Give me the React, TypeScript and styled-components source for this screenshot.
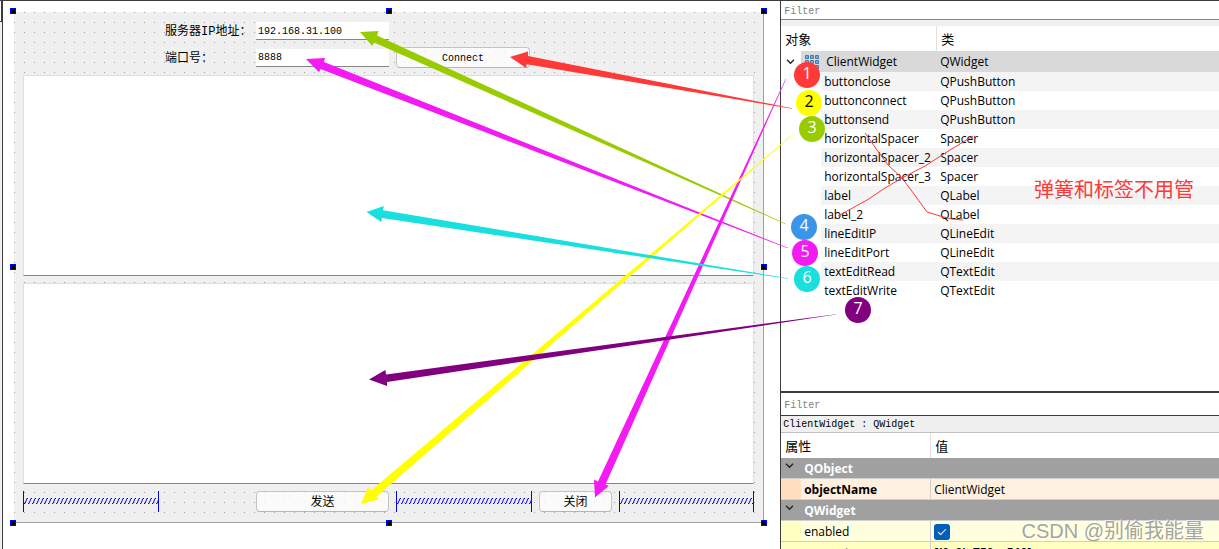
import React from "react";
import styled, { createGlobalStyle } from "styled-components";

const uiFont = `"Open Sans", "Noto Sans CJK SC", sans-serif`;
const monoFont = `"Liberation Mono", "Noto Sans CJK SC", monospace`;

const GlobalStyle = createGlobalStyle`
  *, *::before, *::after { box-sizing: border-box; }
  body { margin: 0; background: #fff; color: #000; font: 12px/18px ${uiFont}; }
  table { border-collapse: separate; border-spacing: 0; table-layout: fixed; width: 100%; }
  th, td { padding: 0; text-align: left; font-weight: 400; white-space: nowrap; }
  button, input, textarea { font: inherit; color: inherit; border-radius: 0; margin: 0; }
`;

const Page = styled.main`
  position: relative;
  display: grid;
  grid-template-columns: minmax(0, 16fr) minmax(0, 9fr);
  grid-template-rows: minmax(0, 1fr);
  height: 100vh;
  min-height: 400px;
  overflow: hidden;
  border-top: 1px solid #3c3c3c;
`;

const Workspace = styled.section`
  display: flex;
  min-width: 0;
`;

const DockEdge = styled.div`
  width: 3px;
  background: #f0f0f0;
  border-right: 1px solid #3c3c3c;
  &::before {
    content: "";
    display: block;
    height: 21px;
    background: #fff;
    border: solid #3c3c3c;
    border-width: 0 1px 1px 0;
  }
`;

const Canvas = styled.div`
  flex: 1;
  display: flex;
  padding: 11px 16px 26px 11px;
`;

const Form = styled.form`
  position: relative;
  flex: 1;
  display: flex;
  flex-direction: column;
  gap: 7px;
  padding: 10px 9px;
  border: solid #a0a0a0;
  border-width: 0 1px 1px 0;
  background: conic-gradient(from 270deg at 1px 1px, #a0a0a0 90deg, #f0f0f0 0) 0 0 / 10px 10px;
  font: 10px/18px ${monoFont};
`;

const Handles = styled.div`
  position: absolute;
  inset: -4px;
  display: grid;
  grid-template-columns: repeat(3, 6px);
  grid-template-rows: repeat(3, 6px);
  justify-content: space-between;
  align-content: space-between;
  pointer-events: none;
`;

const Handle = styled.i<{ $hidden: boolean }>`
  background: #000;
  border: 1px solid #00f;
  visibility: ${(p) => (p.$hidden ? "hidden" : "visible")};
`;

const Fields = styled.div`
  display: grid;
  grid-template-columns: 135fr 84px 133fr 134fr 217fr;
  grid-template-rows: 18px 21px;
  gap: 7px;
  align-items: center;
`;

const FieldLabel = styled.label`
  grid-column: 2;
  padding-top: 2px;
  font-size: 12px;
  white-space: nowrap;
`;

const LineEdit = styled.input`
  width: 100%;
  height: 18px;
  padding: 2px 2px 0;
  border: 0;
  border-bottom: 1px solid #868686;
  background: #fff;
  outline: 0;
`;

const PushButton = styled.button<{ $cjk?: boolean }>`
  width: 100%;
  height: 21px;
  padding: 2px 0 0;
  border: 1px solid #c4c4c4;
  border-bottom-color: #b4b4b4;
  border-radius: 4px;
  background: rgba(255, 255, 255, 0.7);
  font-size: ${(p) => (p.$cjk ? "12px" : "10px")};
`;

const TextEdit = styled.textarea`
  flex: 1;
  min-height: 0;
  width: 100%;
  padding: 4px;
  border: 1px solid #e0e0e0;
  border-bottom-color: #868686;
  background: #fff;
  resize: none;
  outline: 0;
`;

const Actions = styled.div`
  display: grid;
  grid-template-columns: 136fr 83fr 133fr 136fr 73fr 135fr;
  column-gap: 7px;
`;

const SpringBox = styled.svg`
  display: block;
  width: 100%;
  height: 21px;
  border: solid #00f;
  border-width: 0 1px;
`;

const Docks = styled.aside`
  display: grid;
  grid-template-rows: minmax(0, 390fr) minmax(0, 158fr);
  border-left: 1px solid #3c3c3c;
  min-width: 0;
`;

const Panel = styled.section<{ $framed?: boolean }>`
  overflow: hidden;
  border-top: ${(p) => (p.$framed ? "2px solid #3c3c3c" : "0")};
`;

const FilterBox = styled.input<{ $framed?: boolean }>`
  display: block;
  width: 100%;
  height: ${(p) => (p.$framed ? "23px" : "19px")};
  padding: 3px 3px 0;
  border: 0;
  border-bottom: 1px solid ${(p) => (p.$framed ? "#3c3c3c" : "#868686")};
  background: #fff;
  outline: 0;
  font: 10px/14px ${monoFont};
  &::placeholder { color: #808080; opacity: 1; }
`;

const Gap = styled.div`
  height: 6px;
  background: #f0f0f0;
`;

const HeadRow = styled.tr`
  height: 25px;
  font-size: 13px;
  th { padding-left: 4px; }
  th + th { border-left: 1px solid #e0e0e0; }
`;

const RootRow = styled.tr`
  height: 21px;
  td { background: linear-gradient(#d9d9d9, #d9d9d9) no-repeat; }
  td:first-child { background-position: 20px 0; }
  td + td { padding-left: 4px; }
`;

const RootCell = styled.div`
  display: flex;
  align-items: center;
  padding-left: 5px;
  svg { margin-right: 10px; }
  svg + svg { margin-right: 7px; }
`;

const ItemRow = styled.tr<{ $alt: boolean }>`
  height: 19px;
  td {
    background: ${(p) => (p.$alt ? "linear-gradient(#f4f4f4, #f4f4f4)" : "none")} no-repeat;
  }
  td:first-child { padding-left: 43px; background-position: 40px 0; }
  td + td { padding-left: 4px; }
`;

const ObjectPath = styled.div`
  height: 17px;
  padding: 0 2px;
  border-bottom: 1px solid #c0c0c0;
  background: #f0f0f0;
  font: 10px/18px ${monoFont};
`;

const GroupRow = styled.tr`
  height: 21px;
  background: #a0a0a0;
  color: #fff;
  th {
    border-bottom: 1px solid #d0d0d0;
    font-weight: 700;
    padding: 2px 0 0 4px;
  }
  svg { margin: 0 10px 4px 0; }
`;

const PropRow = styled.tr<{ $indent: string; $fill: string; $strong?: boolean }>`
  height: 21px;
  background: ${(p) => p.$fill};
  th, td { border-bottom: 1px solid #d0d0d0; }
  th {
    padding: 2px 0 0 23px;
    background: linear-gradient(${(p) => `${p.$indent}, ${p.$indent}`}) 0 0 / 20px 100% no-repeat;
    font-weight: ${(p) => (p.$strong ? 700 : 400)};
  }
  td { border-left: 1px solid #d0d0d0; padding: 2px 0 0 3px; }
`;

const Check = styled.input`
  appearance: none;
  display: block;
  width: 16px;
  height: 16px;
  border-radius: 3px;
  background: #005fb8;
  &::before {
    content: "";
    display: block;
    width: 8px;
    height: 4px;
    margin: 5px 4px;
    border: solid #fff;
    border-width: 0 0 1px 1px;
    transform: rotate(-45deg);
  }
`;

const Overlay = styled.svg`
  position: absolute;
  left: 0;
  top: -1px;
  width: 100%;
  pointer-events: none;
`;

const Badge = styled.span<{ $x: number; $y: number; $bg: string; $dark?: boolean }>`
  position: absolute;
  left: ${(p) => (p.$x / 1219) * 100}%;
  top: ${(p) => p.$y}px;
  width: 26px;
  height: 26px;
  margin: -14px 0 0 -13px;
  border-radius: 50%;
  background: ${(p) => p.$bg};
  color: ${(p) => (p.$dark ? "#000" : "#fff")};
  font-size: 16px;
  line-height: 23px;
  text-align: center;
`;

const Note = styled.p`
  position: absolute;
  right: 25px;
  top: 174px;
  margin: 0;
  color: #ff3838;
  font: 400 20px/28px "Noto Sans CJK SC", sans-serif;
`;

const Watermark = styled.p`
  position: absolute;
  right: 15px;
  bottom: 4px;
  margin: 0;
  color: rgba(140, 140, 140, 0.8);
  font: 20px/28px "Liberation Sans", "Noto Sans CJK SC", sans-serif;
  text-shadow: -1px -1px 0 rgba(255, 255, 255, 0.6);
`;

const Chevron = ({ color = "#222" }: { color?: string }) => (
  <svg width="9" height="6" viewBox="0 0 9 6" fill="none" stroke={color} strokeWidth="1.3">
    <path d="M1 .8 4.5 4.3 8 .8" />
  </svg>
);

const WidgetIcon = () => (
  <svg width="14" height="14" viewBox="0 0 14 14">
    {[0, 5, 10].flatMap((y) =>
      [0, 5, 10].map((x) => (
        <g key={`${x}-${y}`}>
          <rect x={x} y={y} width="4" height="4" rx="1" fill="#4478a8" />
          <rect x={x + 1} y={y + 1} width="2" height="2" fill="#74aedd" />
        </g>
      )),
    )}
  </svg>
);

const Spring = ({ id }: { id: string }) => (
  <SpringBox aria-hidden="true">
    <defs>
      <pattern id={id} width="4" height="21" patternUnits="userSpaceOnUse">
        <path d="M0 12.5 1 12.5 3 7.5 4 7.5" fill="none" stroke="#00f" />
      </pattern>
    </defs>
    <rect width="100%" height="21" fill={`url(#${id})`} />
  </SpringBox>
);

const items: [string, string][] = [
  ["buttonclose", "QPushButton"],
  ["buttonconnect", "QPushButton"],
  ["buttonsend", "QPushButton"],
  ["horizontalSpacer", "Spacer"],
  ["horizontalSpacer_2", "Spacer"],
  ["horizontalSpacer_3", "Spacer"],
  ["label", "QLabel"],
  ["label_2", "QLabel"],
  ["lineEditIP", "QLineEdit"],
  ["lineEditPort", "QLineEdit"],
  ["textEditRead", "QTextEdit"],
  ["textEditWrite", "QTextEdit"],
];

const arrows = [
  { fill: "#ff3838", points: "510,57 528,51.5 528,56 792,108.2 792,108.8 526.7,64.3 526,68" },
  { fill: "#99cc00", points: "360,32 378.5,31 377,35.5 786,223.8 785.7,224.3 374,42.5 372.3,46" },
  { fill: "#f31bf3", points: "306,59 325,58 324,62 788,247.8 787.7,248.3 320.5,69 319,72.3" },
  { fill: "#f31bf3", points: "595,497.5 594,479.5 598,481.5 785.5,79 786,79.2 605.5,484.5 608.8,486" },
  { fill: "#ffff00", points: "361,504 368,487 371,490.5 791,135.6 791.3,136 376.5,496.5 379,499.3" },
  { fill: "#19dfdf", points: "366.5,212 383.8,206 383,210.3 788,278.3 788,278.8 382,218 381.3,222" },
  { fill: "#800080", points: "369,379.5 385.3,370 386.2,374.4 836,314.2 836,314.6 387,382 387,386" },
];

const badges = [
  { n: 1, x: 807, y: 75, bg: "#ff3838" },
  { n: 2, x: 809, y: 103, bg: "#ffff00", dark: true },
  { n: 3, x: 812, y: 129, bg: "#99cc00" },
  { n: 4, x: 804, y: 227, bg: "#3895e7" },
  { n: 5, x: 805, y: 253, bg: "#f31bf3" },
  { n: 6, x: 807, y: 279, bg: "#19dfdf" },
  { n: 7, x: 858, y: 310, bg: "#800080" },
];

export default function App() {
  return (
    <>
      <GlobalStyle />
      <Page>
        <Workspace>
          <DockEdge />
          <Canvas>
            <Form onSubmit={(e) => e.preventDefault()}>
              <Fields>
                <FieldLabel htmlFor="ip">服务器IP地址：</FieldLabel>
                <LineEdit id="ip" defaultValue="192.168.31.100" />
                <FieldLabel htmlFor="port">端口号：</FieldLabel>
                <LineEdit id="port" defaultValue="8888" />
                <PushButton type="button">Connect</PushButton>
              </Fields>
              <TextEdit aria-label="textEditRead" />
              <TextEdit aria-label="textEditWrite" />
              <Actions>
                <Spring id="spring-left" />
                <span />
                <PushButton type="button" $cjk>发送</PushButton>
                <Spring id="spring-middle" />
                <PushButton type="button" $cjk>关闭</PushButton>
                <Spring id="spring-right" />
              </Actions>
              <Handles aria-hidden="true">
                {Array.from({ length: 9 }, (_, i) => (
                  <Handle key={i} $hidden={i === 4} />
                ))}
              </Handles>
            </Form>
          </Canvas>
        </Workspace>

        <Docks>
          <Panel>
            <FilterBox placeholder="Filter" aria-label="Filter objects" />
            <Gap />
            <table>
              <colgroup>
                <col style={{ width: "155px" }} />
                <col />
              </colgroup>
              <thead>
                <HeadRow>
                  <th>对象</th>
                  <th>类</th>
                </HeadRow>
              </thead>
              <tbody>
                <RootRow>
                  <td>
                    <RootCell>
                      <Chevron />
                      <WidgetIcon />
                      ClientWidget
                    </RootCell>
                  </td>
                  <td>QWidget</td>
                </RootRow>
                {items.map(([name, type], i) => (
                  <ItemRow key={name} $alt={i % 2 === 0}>
                    <td>{name}</td>
                    <td>{type}</td>
                  </ItemRow>
                ))}
              </tbody>
            </table>
          </Panel>

          <Panel $framed>
            <FilterBox $framed placeholder="Filter" aria-label="Filter properties" />
            <ObjectPath>ClientWidget : QWidget</ObjectPath>
            <table>
              <colgroup>
                <col style={{ width: "149px" }} />
                <col />
              </colgroup>
              <thead>
                <HeadRow>
                  <th>属性</th>
                  <th>值</th>
                </HeadRow>
              </thead>
              <tbody>
                <GroupRow>
                  <th colSpan={2}><Chevron />QObject</th>
                </GroupRow>
                <PropRow $indent="#ffdfbf" $fill="#fff0df" $strong>
                  <th scope="row">objectName</th>
                  <td>ClientWidget</td>
                </PropRow>
                <GroupRow>
                  <th colSpan={2}><Chevron />QWidget</th>
                </GroupRow>
                <PropRow $indent="#ffffbf" $fill="#ffffdf">
                  <th scope="row"><label htmlFor="enabled">enabled</label></th>
                  <td><Check type="checkbox" id="enabled" defaultChecked /></td>
                </PropRow>
                <PropRow $indent="#ffffbf" $fill="#ffffbf" $strong>
                  <th scope="row">geometry</th>
                  <td><b>[(0, 0), 750 x 510]</b></td>
                </PropRow>
              </tbody>
            </table>
          </Panel>
        </Docks>

        <Overlay viewBox="0 0 1219 549" aria-hidden="true">
          {arrows.map((a) => (
            <polygon key={a.points} points={a.points} fill={a.fill} />
          ))}
          <g fill="none" stroke="#ff3838">
            <polyline points="865,133 877,150 888,165 902,178 914,194 927,212 940,216 952,219 963,220" />
            <polyline points="973,136 950,150 925,166 902,178 885,188 867,200 838,216" />
          </g>
        </Overlay>
        {badges.map((b) => (
          <Badge key={b.n} $x={b.x} $y={b.y} $bg={b.bg} $dark={b.dark}>{b.n}</Badge>
        ))}
        <Note>弹簧和标签不用管</Note>
        <Watermark>CSDN @别偷我能量</Watermark>
      </Page>
    </>
  );
}
